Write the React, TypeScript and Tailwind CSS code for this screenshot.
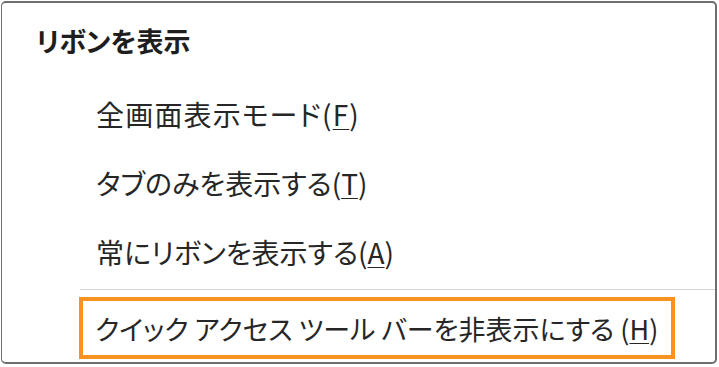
const items = [
  { label: '全画面表示モード(', key: 'F', tail: ')', extra: 'tracking-[1.2px]' },
  { label: 'タブのみを表示する(', key: 'T', tail: ')', extra: '' },
  { label: '常にリボンを表示する(', key: 'A', tail: ')', extra: '' },
]

const Label = ({ label, k, tail }: { label: string; k: string; tail: string }) => (
  <span className="whitespace-nowrap">
    {label}
    <span className="underline decoration-1 underline-offset-[3px]">{k}</span>
    {tail}
  </span>
)

export default function App() {
  return (
    <div className="w-[719px] h-[367px] bg-white pt-[1px] pl-[1px] font-['Noto_Sans_CJK_JP',sans-serif] [font-feature-settings:'palt'] text-[#262626]">
      <div className="w-[716px] h-[363px] border-t-2 border-l border-r-2 border-b-2 border-[#6e6e6e] rounded-[5px] flex flex-col">
        {/* header */}
        <div className="h-[74px] flex items-center pl-[34px] text-[27px] font-bold leading-none text-[#1e1e1e]">
          リボンを表示
        </div>

        {/* menu items */}
        <div className={`h-[74px] flex items-center pl-[94px] text-[28px] leading-none ${items[0].extra}`}>
          <Label label={items[0].label} k={items[0].key} tail={items[0].tail} />
        </div>
        <div className="h-[64px] flex items-center pl-[94px] text-[28px] leading-none">
          <Label label={items[1].label} k={items[1].key} tail={items[1].tail} />
        </div>
        <div className="h-[74px] flex items-center pl-[94px] text-[28px] leading-none">
          <Label label={items[2].label} k={items[2].key} tail={items[2].tail} />
        </div>

        <div className="ml-[78px] h-px bg-[#d6d6d6]" />

        <div className="mt-[7px] ml-[77px] w-[596px] h-[62px] border-4 border-[#f7931e] flex items-center pl-[12px] text-[27px] leading-none">
          <Label label="クイック アクセス ツール バーを非表示にする (" k="H" tail=")" />
        </div>
      </div>
    </div>
  )
}
